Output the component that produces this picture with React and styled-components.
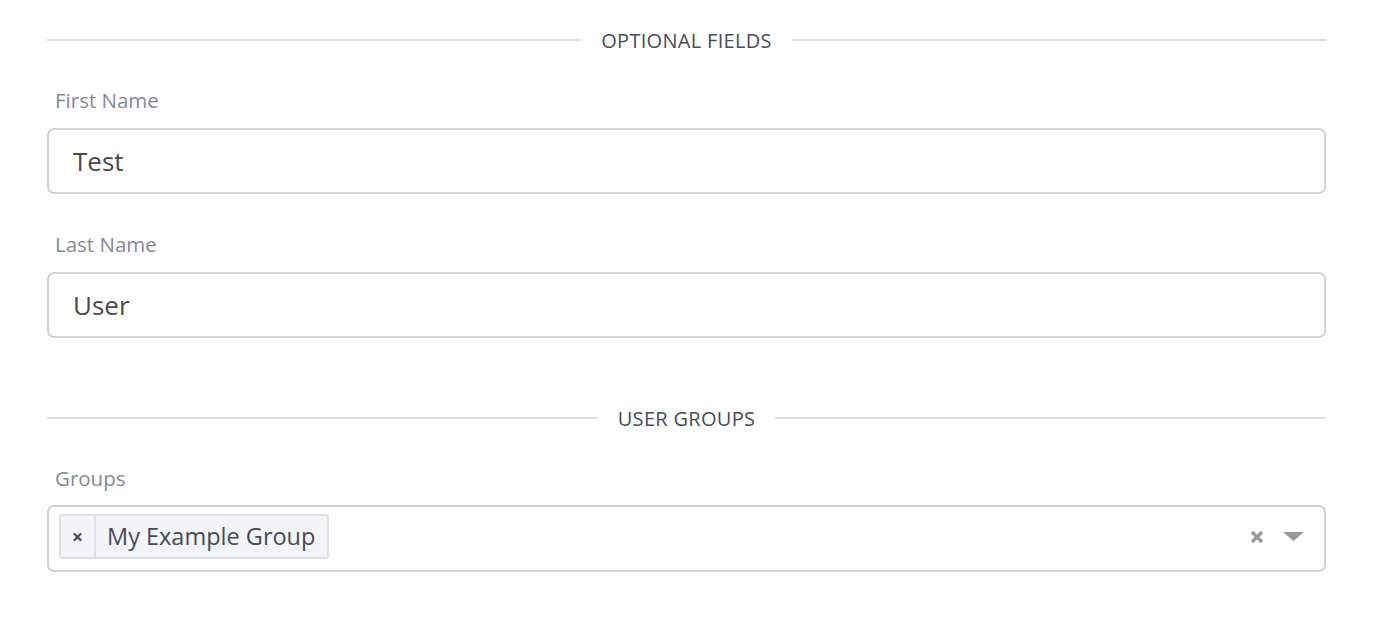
import React from 'react';
import styled, { createGlobalStyle } from 'styled-components';

const GlobalStyle = createGlobalStyle`
  body {
    margin: 0;
    background: #fff;
    font-family: "Open Sans", "Noto Sans", sans-serif;
  }
`;

const Form = styled.div`
  width: 1279px;
  padding: 25px 0 0 47px;
`;

const Divider = styled.div`
  display: flex;
  align-items: center;
  height: 30px;
  margin-top: ${p => p.top || 0}px;
  &::before,
  &::after {
    content: '';
    flex: 1;
    height: 2px;
    background: #dcdcdc;
  }
`;

const DividerText = styled.span`
  padding: 0 20px;
  font-size: 20px;
  font-weight: 500;
  color: #474d5b;
  letter-spacing: 0.3px;
`;

const Field = styled.div`
  margin-top: ${p => p.top || 0}px;
`;

const Label = styled.div`
  padding-left: 8px;
  font-size: 20.5px;
  font-weight: 500;
  line-height: 24px;
  height: 24px;
  color: #858b96;
  margin-bottom: 16px;
`;

const Input = styled.div`
  box-sizing: border-box;
  height: 66px;
  border: 2px solid #d2d2d2;
  border-radius: 7px;
  padding: 0 24px;
  display: flex;
  align-items: center;
  font-size: 26px;
  font-weight: 500;
  color: #4a4a4a;
`;

const Select = styled(Input)`
  height: 67px;
  margin-top: -1px;
  padding: 0 20px 0 10px;
  justify-content: space-between;
`;

const Chip = styled.div`
  display: flex;
  align-items: stretch;
  height: 45px;
  margin-top: -5px;
  box-sizing: border-box;
  border: 2px solid #dde0e4;
  border-radius: 3px;
  background: #f3f4f6;
  color: #454b59;
`;

const ChipRemove = styled.span`
  width: 33px;
  display: flex;
  align-items: center;
  justify-content: center;
  border-right: 2px solid #dde0e4;
  font-size: 20px;
  font-weight: 700;
  color: #454b59;
`;

const ChipLabel = styled.span`
  display: flex;
  align-items: center;
  padding: 0 12px 0 11px;
  font-size: 23.5px;
  font-weight: 500;
`;

const Controls = styled.div`
  display: flex;
  align-items: center;
  gap: 19px;
  margin-top: -4px;
`;

function Clear() {
  return (
    <svg width="14" height="14" viewBox="0 0 14 14">
      <path d="M2 2 L12 12 M12 2 L2 12" stroke="#999" strokeWidth="3.2" />
    </svg>
  );
}

function Arrow() {
  return (
    <svg width="21" height="10" viewBox="0 0 21 10">
      <path d="M0 0 H21 L10.5 9 Z" fill="#999" />
    </svg>
  );
}

export default function App() {
  return (
    <>
      <GlobalStyle />
      <Form>
        <Divider>
          <DividerText>OPTIONAL FIELDS</DividerText>
        </Divider>
        <Field top={33}>
          <Label>First Name</Label>
          <Input>Test</Input>
        </Field>
        <Field top={38}>
          <Label>Last Name</Label>
          <Input>User</Input>
        </Field>
        <Divider top={65}>
          <DividerText>USER GROUPS</DividerText>
        </Divider>
        <Field top={33}>
          <Label>Groups</Label>
          <Select>
            <Chip>
              <ChipRemove>×</ChipRemove>
              <ChipLabel>My Example Group</ChipLabel>
            </Chip>
            <Controls>
              <Clear />
              <Arrow />
            </Controls>
          </Select>
        </Field>
      </Form>
    </>
  );
}
